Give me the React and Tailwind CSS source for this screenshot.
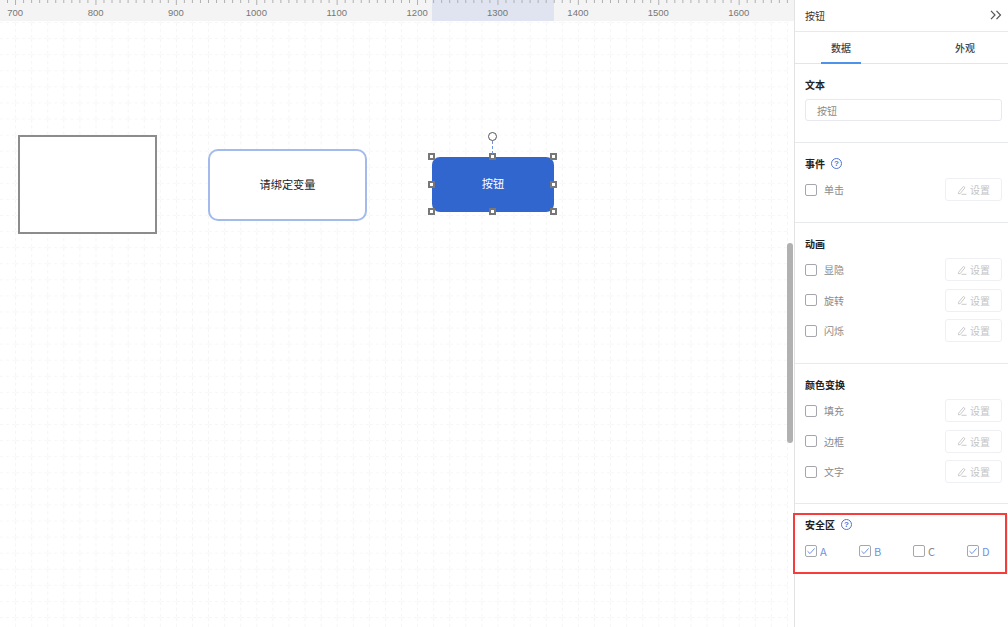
import React from 'react';

const cjk = { fontFamily: '"Noto Sans CJK SC", "Noto Sans", sans-serif' };

const rulerLabels = [700, 800, 900, 1000, 1100, 1200, 1300, 1400, 1500, 1600];

function Ruler() {
  const ticks = [];
  for (let i = 0; i < 100; i++) {
    const x = 7 + i * 8.04;
    if (x < 788) ticks.push(x);
  }
  return (
    <div className="relative h-[21px] bg-[#f4f4f4] overflow-hidden">
      <div className="absolute left-[432px] top-0 w-[122px] h-[21px] bg-[#dfe4f0]" />
      <svg className="absolute left-0 top-0" width="794" height="8">
        {ticks.map((x, i) => {
          const major = Math.abs(((x - 15) / 80.4) - Math.round((x - 15) / 80.4)) < 0.02;
          return <line key={i} x1={x + 0.5} x2={x + 0.5} y1="0" y2={major ? 5 : 3} stroke="#b0b0b0" strokeWidth="1" />;
        })}
      </svg>
      <div className="relative flex ml-[-25px] pt-[7px]">
        {rulerLabels.map((v) => (
          <span key={v} className="w-[80.4px] shrink-0 text-center text-[9.5px] leading-[11px] text-[#777] font-['Liberation_Sans',sans-serif]">
            {v}
          </span>
        ))}
      </div>
    </div>
  );
}

function Grid() {
  return (
    <svg className="absolute left-0 top-0" width="788" height="606">
      <defs>
        <pattern id="grid" x="0" y="2" width="16.08" height="16.08" patternUnits="userSpaceOnUse">
          <path d="M16 0V16.08M0 16H16.08" fill="none" stroke="#eeeeee" strokeWidth="1" strokeDasharray="3 3" />
        </pattern>
      </defs>
      <rect width="788" height="606" fill="url(#grid)" />
    </svg>
  );
}

function Handle({ hidden }) {
  if (hidden) return <div className="w-[7px] h-[7px]" />;
  return <div className="w-[7px] h-[7px] bg-white border-2 border-[#777]" />;
}

function Canvas() {
  return (
    <div className="relative flex-1 bg-white">
      <Grid />
      <div className="absolute left-[18px] top-[114px] w-[139px] h-[99px] bg-white border-2 border-[#8c8c8c]" />
      <div className="absolute left-[208px] top-[128px] w-[159px] h-[72px] pb-[2px] bg-white border-2 border-[#a3baec] rounded-[10px] flex items-center justify-center text-[11.2px] text-[#222]">
        请绑定变量
      </div>
      <div className="absolute left-[432px] top-[136px] w-[122px] h-[55px] pb-[2px] bg-[#3166cf] rounded-[8px] flex items-center justify-center text-[11.2px] text-white">
        按钮
        {/* selection frame */}
        <div className="absolute left-[-4px] right-[-3px] top-[-4px] bottom-[-3px] flex flex-col justify-between">
          <div className="flex justify-between"><Handle /><Handle /><Handle /></div>
          <div className="flex justify-between"><Handle /><Handle hidden /><Handle /></div>
          <div className="flex justify-between"><Handle /><Handle /><Handle /></div>
        </div>
      </div>
      <div className="absolute left-[488px] top-[111px] w-[9px] h-[9px] rounded-full border-[1.5px] border-[#555] bg-white" />
      <div className="absolute left-[492px] top-[120px] h-[13px] border-l border-dashed border-[#6f93dc]" />
      <div className="absolute left-[787px] top-[222px] w-[6px] h-[200px] rounded-full bg-[#b1b1b1]" />
    </div>
  );
}

function Check({ checked }) {
  return (
    <span className="w-[12px] h-[12px] shrink-0 rounded-[2px] border border-[#a5a7ad] bg-white flex items-center justify-center">
      {checked && (
        <svg width="10" height="10" viewBox="0 0 10 10">
          <path d="M1.5 5.2L4 7.6L8.6 2.4" fill="none" stroke="#6f93e6" strokeWidth="1" />
        </svg>
      )}
    </span>
  );
}

function Help() {
  return (
    <span className="w-[11px] h-[11px] rounded-full border border-[#4f74d8] text-[#4f74d8] text-[8px] leading-[9px] text-center font-['Liberation_Sans',sans-serif]">
      ?
    </span>
  );
}

function SetButton() {
  return (
    <div className="w-[57px] h-[23px] rounded-[3px] border border-[#eff0f3] flex items-center justify-center gap-[3px] text-[10px] text-[#c4c4c4]">
      <svg width="10" height="10" viewBox="0 0 10 10" fill="none" stroke="#c4c4c4" strokeWidth="0.9">
        <path d="M1.6 7.2L6.4 1.4L8 2.7L3.2 8.6L1.4 8.8Z" />
        <path d="M4.5 9.3H9.5" />
      </svg>
      设置
    </div>
  );
}

function Row({ label }) {
  return (
    <div className="h-[23px] flex items-center justify-between">
      <div className="flex items-center gap-[7px] text-[10px] text-[#8a8a8a]">
        <Check />
        {label}
      </div>
      <SetButton />
    </div>
  );
}

function Section({ title, help, rows, height }) {
  return (
    <div className={`border-b border-[#e8e9ec] pl-[10px] pr-[6px] pt-[13px] ${height}`}>
      <div className="h-[14px] flex items-center gap-[6px] text-[10px] font-bold text-[#222]">
        {title}
        {help && <Help />}
      </div>
      <div className="mt-[8px] flex flex-col gap-[7.5px]">
        {rows.map((r) => <Row key={r} label={r} />)}
      </div>
    </div>
  );
}

function Panel() {
  return (
    <div className="relative w-[214px] h-[627px] shrink-0 bg-white border-l border-[#e2e2e2]">
      <div className="h-[32px] pl-[10px] pr-[6px] pb-[1px] flex items-center justify-between border-b border-[#e8e9ec] text-[10px] text-[#333]">
        按钮
        <svg width="12" height="10" viewBox="0 0 12 10" fill="none" stroke="#555" strokeWidth="1.2">
          <path d="M1 0.8L5 5L1 9.2" />
          <path d="M6.5 0.8L10.5 5L6.5 9.2" />
        </svg>
      </div>
      <div className="h-[32px] pl-[26px] flex gap-[84px] border-b border-[#e3e5ec] text-[10px] font-medium text-[#444]">
        <div className="relative w-[40px] flex items-center justify-center">
          数据
          <div className="absolute left-0 bottom-[-1px] w-[40px] h-[2px] bg-[#4d93ea]" />
        </div>
        <div className="w-[40px] flex items-center justify-center">外观</div>
      </div>
      <div className="h-[79px] border-b border-[#e8e9ec] pl-[10px] pr-[6px] pt-[13px]">
        <div className="h-[14px] flex items-center text-[10px] font-bold text-[#222]">文本</div>
        <div className="mt-[8px] h-[22px] rounded-[3px] border border-[#e8e9ee] px-[11px] flex items-center text-[10px] text-[#8a8a8a]">
          按钮
        </div>
      </div>
      <Section title="事件" help rows={['单击']} height="h-[80px]" />
      <Section title="动画" rows={['显隐', '旋转', '闪烁']} height="h-[141px]" />
      <Section title="颜色变换" rows={['填充', '边框', '文字']} height="h-[140px]" />
      <div className="pl-[10px] pr-[6px] pt-[13px]">
        <div className="h-[14px] flex items-center gap-[6px] text-[10px] font-bold text-[#222]">
          安全区
          <Help />
        </div>
        <div className="mt-[12px] flex">
          {[['A', true], ['B', true], ['C', false], ['D', true]].map(([l, c]) => (
            <div key={l} className={`w-[54px] shrink-0 flex items-center gap-[3px] text-[11px] ${c ? 'text-[#6f93e6]' : 'text-[#8a8a8a]'}`}>
              <Check checked={c} />
              {l}
            </div>
          ))}
        </div>
      </div>
      <div className="absolute left-[-2px] top-[513px] w-[214px] h-[61px] border-2 border-[#f73c3c]" />
    </div>
  );
}

export default function App() {
  return (
    <div className="flex w-[1008px] h-[627px] overflow-hidden bg-white" style={cjk}>
      <div className="flex-1 flex flex-col">
        <Ruler />
        <Canvas />
      </div>
      <Panel />
    </div>
  );
}
